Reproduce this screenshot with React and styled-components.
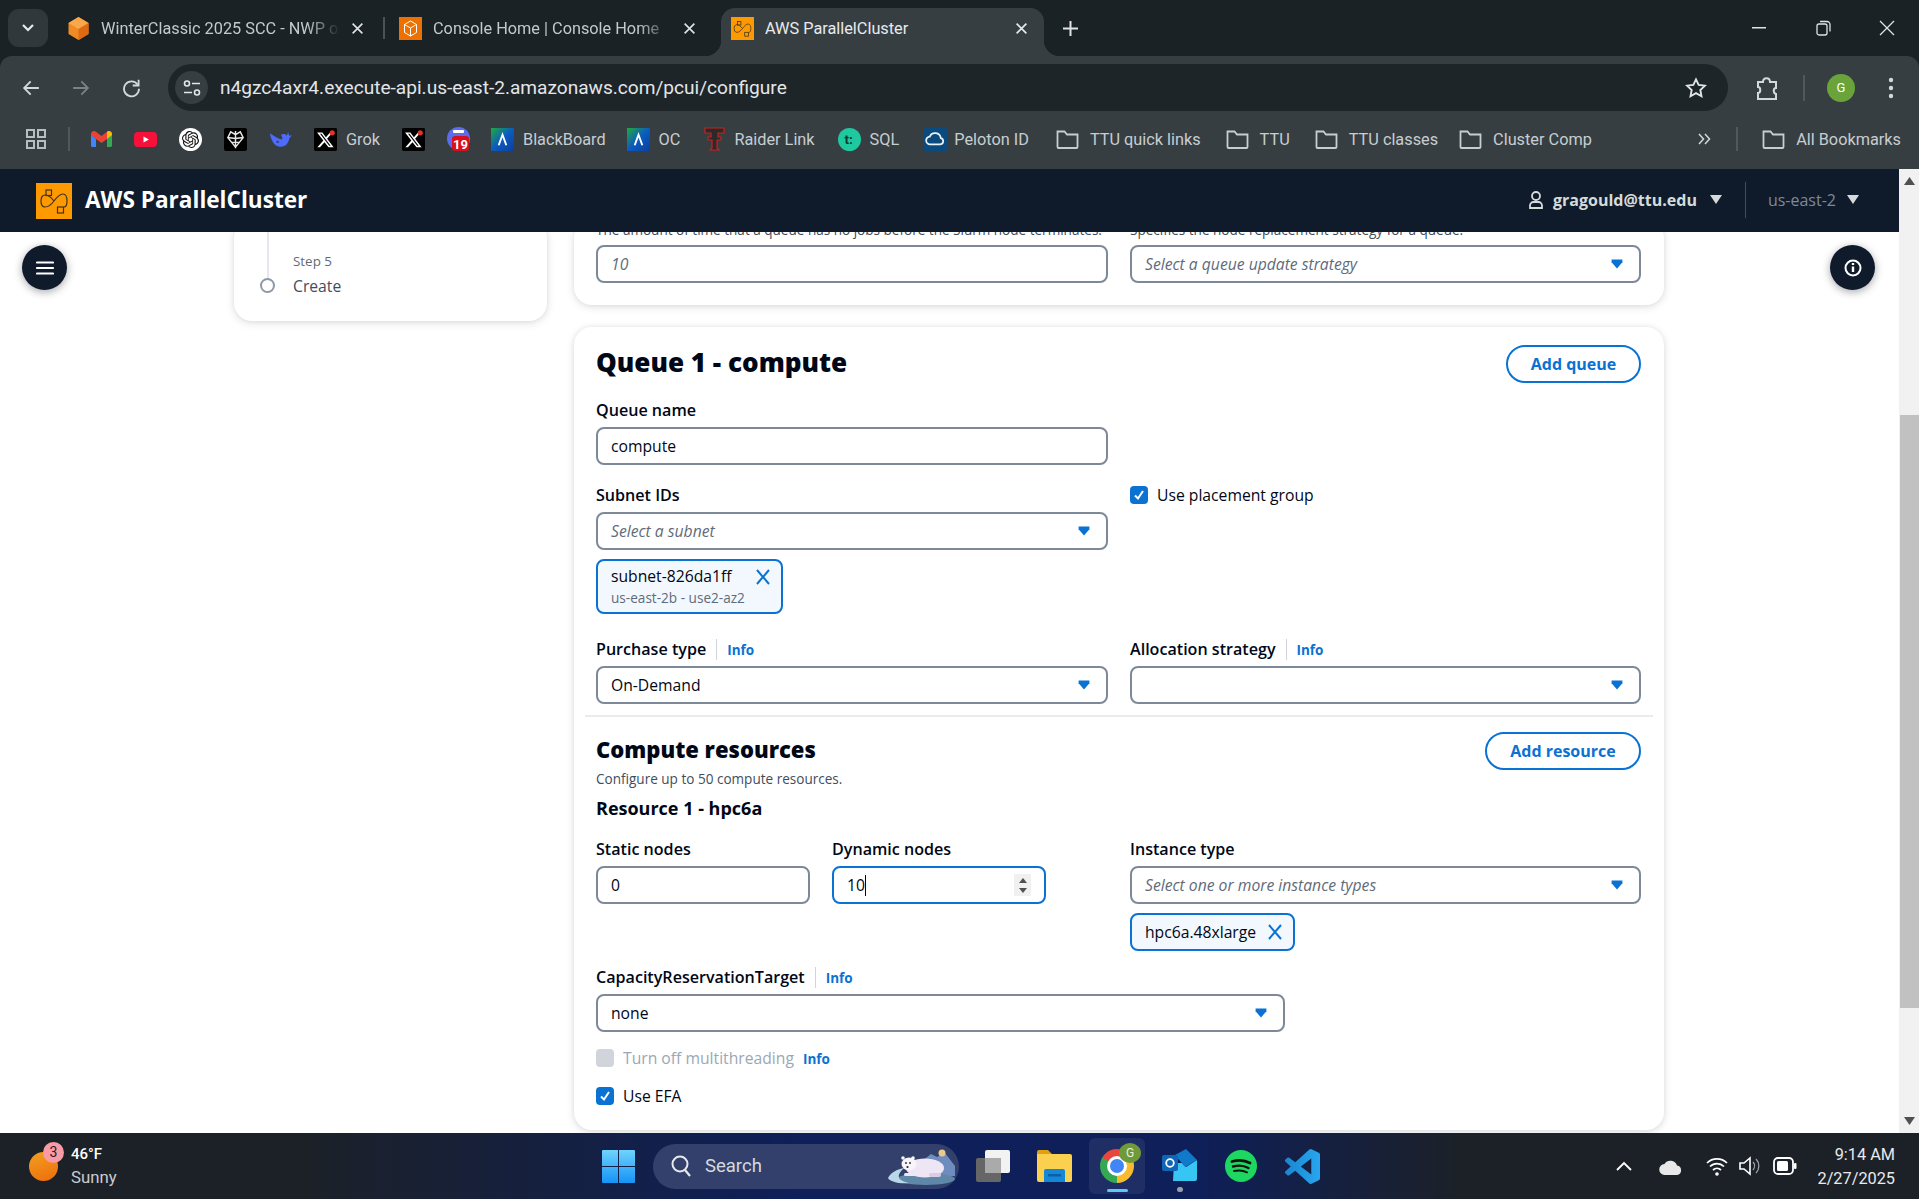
import React from "react";
import styled, { createGlobalStyle } from "styled-components";
import { SiOpenai } from "react-icons/si";

const GlobalStyle = createGlobalStyle`
  html, body {
    margin: 0;
    padding: 0;
    overflow: hidden;
    background: #fff;
  }
  * {
    box-sizing: border-box;
  }
`;

const Screen = styled.div`
  width: 1919px;
  height: 1199px;
  display: flex;
  flex-direction: column;
  overflow: hidden;
  font-family: "Open Sans", "Noto Sans", sans-serif;
  color: #000716;
`;

/* browser tabs */
const TabStrip = styled.div`
  height: 56px;
  flex: none;
  display: flex;
  align-items: flex-end;
  padding-left: 8px;
  background: #1b2226;
  font-family: Roboto, "Open Sans", sans-serif;
`;

const TabSearch = styled.div`
  width: 40px;
  height: 38px;
  margin: 0 9px 9px 0;
  border-radius: 11px;
  background: #30383c;
  display: flex;
  align-items: center;
  justify-content: center;
`;

const Tab = styled.div`
  position: relative;
  width: 323px;
  height: 48px;
  flex: none;
  display: flex;
  align-items: center;
  padding: 0 16px 8px 10px;
  gap: 11px;
  border-radius: 14px 14px 0 0;
  font-size: 16.3px;
  color: ${(p) => (p.$active ? "#e8eaed" : "#c4c9cc")};
  background: ${(p) => (p.$active ? "#363e42" : "transparent")};
  ${(p) =>
    p.$active &&
    `
    &::before, &::after {
      content: "";
      position: absolute;
      bottom: 0;
      width: 16px;
      height: 16px;
    }
    &::before {
      left: -16px;
      background: radial-gradient(circle at 0 0, transparent 16px, #363e42 16.5px);
    }
    &::after {
      right: -16px;
      background: radial-gradient(circle at 100% 0, transparent 16px, #363e42 16.5px);
    }
  `}
`;

const TabTitle = styled.span`
  flex: 1;
  white-space: nowrap;
  overflow: hidden;
  -webkit-mask-image: ${(p) =>
    p.$fade ? "linear-gradient(90deg, #000 86%, transparent 100%)" : "none"};
`;

const TabDivider = styled.div`
  width: 2px;
  height: 22px;
  margin: 0 4px 17px 3px;
  background: ${(p) => (p.$hidden ? "transparent" : "#4a5256")};
  flex: none;
`;

const TabAdd = styled.div`
  margin: 0 0 19px 18px;
  display: flex;
`;

const WindowControls = styled.div`
  margin-left: auto;
  align-self: stretch;
  display: flex;
`;

const WindowButton = styled.div`
  width: 64px;
  display: flex;
  align-items: center;
  justify-content: center;
`;

/* toolbar and bookmarks */
const BrowserBar = styled.div`
  height: 113px;
  flex: none;
  background: #1b2226;
  font-family: Roboto, "Open Sans", sans-serif;
`;

const BrowserBarInner = styled.div`
  height: 100%;
  background: #363e42;
  border-radius: 12px 12px 0 0;
`;

const Toolbar = styled.div`
  height: 55px;
  padding: 8px 16px 0 7px;
  display: flex;
  align-items: center;
`;

const NavButton = styled.div`
  width: 48px;
  height: 47px;
  margin-right: ${(p) => p.$gap || 0}px;
  display: flex;
  align-items: center;
  justify-content: center;
  flex: none;
`;

const AddressBar = styled.div`
  flex: 1;
  height: 47px;
  margin-left: 13px;
  border-radius: 24px;
  background: #1e2528;
  display: flex;
  align-items: center;
  padding: 0 21px 0 7px;
`;

const SiteBadge = styled.div`
  width: 33px;
  height: 33px;
  border-radius: 50%;
  background: #363e42;
  display: flex;
  align-items: center;
  justify-content: center;
`;

const Url = styled.div`
  margin-left: 12px;
  flex: 1;
  font-size: 19.1px;
  color: #e3e6e8;
`;

const ToolIcon = styled.div`
  width: ${(p) => p.$w}px;
  margin-left: ${(p) => p.$ml}px;
  display: flex;
  justify-content: center;
  flex: none;
`;

const ToolDivider = styled.div`
  width: 2px;
  height: 26px;
  margin-left: 18px;
  background: #50585c;
  flex: none;
`;

const Avatar = styled.div`
  width: 28px;
  height: 28px;
  margin-left: 22px;
  border-radius: 50%;
  background: #6aa33a;
  color: #fff;
  font-size: 13px;
  display: flex;
  align-items: center;
  justify-content: center;
  flex: none;
`;

const BookmarkBar = styled.div`
  height: 58px;
  padding: 0 18px 2px 26px;
  display: flex;
  align-items: center;
  font-size: 16.3px;
  color: #c8cdd0;
`;

const BookmarkDivider = styled.div`
  width: 2px;
  height: 24px;
  margin: 0 ${(p) => p.$right}px 0 ${(p) => p.$left}px;
  background: #50585c;
  flex: none;
`;

const Bookmark = styled.div`
  display: flex;
  align-items: center;
  gap: ${(p) => p.$inner ?? 9}px;
  margin-right: ${(p) => p.$gap ?? 22}px;
  white-space: nowrap;
  flex: none;
`;

const OpenAiBadge = styled.div`
  width: 23px;
  height: 23px;
  border-radius: 50%;
  background: #fff;
  color: #111;
  display: flex;
  align-items: center;
  justify-content: center;
`;

const Chevrons = styled.span`
  margin-left: auto;
  display: flex;
  flex: none;
`;

/* app view */
const AppView = styled.div`
  position: relative;
  flex: 1;
  min-height: 0;
  display: flex;
`;

const AppColumn = styled.div`
  flex: 1;
  min-width: 0;
  display: flex;
  flex-direction: column;
`;

const AppHeader = styled.header`
  height: 63px;
  flex: none;
  background: #0f1b2a;
  display: flex;
  align-items: center;
  padding: 0 0 0 36px;
  color: #fff;
`;

const AppTitle = styled.div`
  margin: 0 0 2px 13px;
  font-size: 22.6px;
  font-weight: 700;
`;

const HeaderRight = styled.div`
  margin-left: auto;
  display: flex;
  align-items: center;
  padding: 0 40px 2px 0;
`;

const UserName = styled.span`
  margin-left: 9px;
  font-size: 16px;
  font-weight: 700;
  color: #d5dbdb;
`;

const HeaderDivider = styled.div`
  width: 1px;
  height: 36px;
  margin: 0 22px 0 23px;
  background: #414d5c;
`;

const RegionName = styled.span`
  font-size: 16px;
  color: #7d8998;
`;

const HeaderCaret = styled.span`
  width: 0;
  height: 0;
  margin-left: ${(p) => p.$ml}px;
  border-left: 6px solid transparent;
  border-right: 6px solid transparent;
  border-top: 9px solid #d5dbdb;
`;

const Viewport = styled.div`
  flex: 1;
  min-height: 0;
  overflow: hidden;
  background: #fff;
`;

const ScrolledPage = styled.div`
  margin-top: -12px;
  padding-left: 234px;
  display: flex;
  align-items: flex-start;
  gap: 27px;
`;

const Card = styled.section`
  background: #fff;
  border-radius: 18px;
  box-shadow: 0 2px 9px rgba(0, 28, 36, 0.13), 0 0 5px rgba(0, 28, 36, 0.06);
`;

const SideCard = styled(Card)`
  width: 313px;
  display: flex;
  padding: 0 0 25px 26px;
`;

const StepMarker = styled.div`
  width: 15px;
  display: flex;
  flex-direction: column;
  align-items: center;
  padding-bottom: 3px;
`;

const StepLine = styled.div`
  width: 2px;
  flex: 1;
  background: #e4e7eb;
`;

const StepCircle = styled.div`
  width: 15px;
  height: 15px;
  border: 2px solid #8d99a8;
  border-radius: 50%;
  flex: none;
`;

const StepText = styled.div`
  margin-left: 18px;
  padding-top: 32px;
`;

const StepLabel = styled.div`
  font-size: 13.4px;
  line-height: 18px;
  color: #5f6b7a;
`;

const StepName = styled.div`
  margin-top: 6px;
  font-size: 15.7px;
  line-height: 20px;
  color: #414d5c;
`;

const MainColumn = styled.div`
  width: 1090px;
  display: flex;
  flex-direction: column;
  gap: 22px;
`;

const FormCard = styled(Card)`
  padding: 0 23px ${(p) => p.$bottom}px 22px;
`;

const Columns = styled.div`
  display: grid;
  grid-template-columns: 512px 511px;
  column-gap: 22px;
  margin-top: ${(p) => p.$mt || 0}px;
`;

const NodeColumns = styled.div`
  display: grid;
  grid-template-columns: 214px 214px;
  column-gap: 22px;
`;

const Helper = styled.div`
  font-size: 13.55px;
  line-height: 20px;
  color: #414d5c;
  white-space: nowrap;
`;

const Box = styled.div`
  position: relative;
  height: 38px;
  width: ${(p) => p.$w || "100%"};
  margin-top: ${(p) => p.$mt || 0}px;
  padding: 0 12px 1px 13px;
  display: flex;
  align-items: center;
  border: 2px solid ${(p) => (p.$focus ? "#0972d3" : "#7d8998")};
  border-radius: 8px;
  background: #fff;
  font-size: 15.7px;
  line-height: 22px;
  color: #000716;
`;

const Placeholder = styled.span`
  flex: 1;
  font-style: italic;
  color: #5f6b7a;
`;

const BoxValue = styled.span`
  flex: 1;
`;

const Caret = styled.svg`
  width: 12px;
  height: 10px;
  margin-right: 4px;
  flex: none;
`;

const TextCaret = styled.span`
  display: inline-block;
  width: 1px;
  height: 21px;
  background: #000716;
  vertical-align: -5px;
`;

const Spinner = styled.div`
  position: absolute;
  right: 13px;
  top: 6px;
  width: 17px;
  height: 22px;
  background: #f0f0f0;
  display: flex;
  flex-direction: column;
  align-items: center;
  justify-content: center;
  gap: 5px;
`;

const SpinArrow = styled.span`
  width: 0;
  height: 0;
  border-left: 4px solid transparent;
  border-right: 4px solid transparent;
  ${(p) => (p.$up ? "border-bottom: 5px solid #505050;" : "border-top: 5px solid #505050;")}
`;

const Label = styled.div`
  height: 22px;
  display: flex;
  align-items: center;
  margin-top: ${(p) => p.$mt || 0}px;
  margin-bottom: 6px;
  font-size: 16.1px;
  font-weight: 600;
  white-space: nowrap;
`;

const InfoLink = styled.span`
  margin-left: ${(p) => p.$ml || 0}px;
  padding-top: 2px;
  font-size: 13.5px;
  font-weight: 700;
  color: #0972d3;
`;

const InfoDivider = styled.span`
  width: 1px;
  height: 21px;
  margin-left: 10px;
  background: #d1d5db;
`;

const TitleRow = styled.div`
  display: flex;
  align-items: center;
  justify-content: space-between;
  margin-top: ${(p) => p.$mt}px;
`;

const QueueTitle = styled.h2`
  margin: -4px 0 0;
  font-size: 26.1px;
  line-height: 36px;
  font-weight: 800;
`;

const SectionTitle = styled.h3`
  margin: -4px 0 0;
  font-size: 22px;
  line-height: 30px;
  font-weight: 800;
`;

const SubText = styled.div`
  font-size: 13.55px;
  line-height: 18px;
  color: #414d5c;
`;

const ResourceTitle = styled.h4`
  margin: 9px 0 0;
  font-size: 18px;
  line-height: 22px;
  font-weight: 700;
`;

const PillButton = styled.div`
  height: 38px;
  width: ${(p) => p.$w}px;
  border: 2px solid #0972d3;
  border-radius: 20px;
  display: flex;
  align-items: center;
  justify-content: center;
  font-size: 16px;
  font-weight: 700;
  color: #0972d3;
`;

const Token = styled.div`
  width: ${(p) => p.$w}px;
  height: ${(p) => p.$h}px;
  margin-top: 9px;
  padding: ${(p) => (p.$tall ? "3px" : "0")} 10px 0 13px;
  border: 2px solid #0972d3;
  border-radius: 8px;
  background: #f2f8fd;
  display: flex;
  align-items: ${(p) => (p.$tall ? "flex-start" : "center")};
  justify-content: space-between;
  font-size: 15.7px;
  line-height: 24px;
`;

const TokenSub = styled.div`
  font-size: 13.6px;
  line-height: 20px;
  color: #5f6b7a;
`;

const TokenClose = styled.svg`
  margin-top: ${(p) => p.$mt || 0}px;
  flex: none;
`;

const Divider = styled.div`
  height: 2px;
  margin: 11px -12px 0 -11px;
  background: #e9ebed;
`;

const CheckRow = styled.div`
  height: 18px;
  margin-top: ${(p) => p.$mt || 0}px;
  display: flex;
  align-items: center;
  font-size: 15.7px;
  color: ${(p) => (p.$off ? "#9ba7b6" : "#000716")};
  white-space: nowrap;
`;

const CheckBox = styled.span`
  width: 18px;
  height: 18px;
  margin-right: ${(p) => p.$gap}px;
  border-radius: 4px;
  background: ${(p) => (p.$off ? "#d1d5db" : "#0972d3")};
  display: flex;
  align-items: center;
  justify-content: center;
  flex: none;
`;

const FloatButton = styled.div`
  position: absolute;
  top: 76px;
  ${(p) => (p.$right ? "right: 44px;" : "left: 22px;")}
  width: 45px;
  height: 45px;
  border-radius: 50%;
  background: #0f1b2a;
  box-shadow: 0 2px 8px rgba(0, 7, 22, 0.35);
  display: flex;
  align-items: center;
  justify-content: center;
`;

const ScrollTrack = styled.div`
  width: 20px;
  flex: none;
  background: #f1f1f1;
  display: flex;
  flex-direction: column;
  align-items: flex-end;
`;

const ScrollArrow = styled.div`
  width: 19px;
  height: 24px;
  display: flex;
  align-items: center;
  justify-content: center;
  margin-top: ${(p) => (p.$down ? "auto" : "0")};
`;

const ScrollThumb = styled.div`
  width: 19px;
  height: 593px;
  margin-top: 222px;
  background: #c1c1c1;
`;

/* windows taskbar */
const Taskbar = styled.div`
  height: 66px;
  flex: none;
  display: flex;
  align-items: center;
  background: linear-gradient(90deg, #1c2128 0, #1c2128 16%, #0e1f5a 42%, #0e1f5a 62%, #1c2128 76%, #1c2128 100%);
  color: #fff;
  font-family: Roboto, "Open Sans", sans-serif;
`;

const Weather = styled.div`
  position: relative;
  width: 602px;
  padding-left: 71px;
  flex: none;
  font-size: 15px;
`;

const WeatherSun = styled.div`
  position: absolute;
  left: 29px;
  top: 9px;
  width: 29px;
  height: 29px;
  border-radius: 50%;
  background: linear-gradient(160deg, #f0a020, #ef6c0c);
`;

const WeatherBadge = styled.div`
  position: absolute;
  left: 43px;
  top: -1px;
  width: 21px;
  height: 21px;
  border-radius: 50%;
  background: #f99aa5;
  color: #1c2128;
  font-size: 14px;
  display: flex;
  align-items: center;
  justify-content: center;
`;

const WeatherTemp = styled.div`
  font-weight: 500;
  line-height: 22px;
`;

const WeatherSky = styled.div`
  font-size: 16.8px;
  line-height: 25px;
  color: #c9ccd0;
`;

const SearchPill = styled.div`
  width: 306px;
  height: 45px;
  margin-left: 18px;
  padding-left: 17px;
  border-radius: 23px;
  background: #33406b;
  display: flex;
  align-items: center;
  font-size: 18.5px;
  color: #d6d9de;
  position: relative;
`;

const SearchText = styled.span`
  margin-left: 13px;
`;

const Mascot = styled.svg`
  position: absolute;
  right: 4px;
  top: 4px;
`;

const TaskIcon = styled.div`
  position: relative;
  margin-left: ${(p) => p.$ml}px;
  width: ${(p) => p.$w}px;
  height: 56px;
  display: flex;
  align-items: center;
  justify-content: center;
  flex: none;
  border-radius: 6px;
  background: ${(p) => (p.$active ? "rgba(255,255,255,0.07)" : "transparent")};
`;

const RunBar = styled.span`
  position: absolute;
  left: 50%;
  bottom: 2px;
  width: ${(p) => (p.$wide ? 21 : 6)}px;
  height: ${(p) => (p.$wide ? 3 : 5)}px;
  margin-left: ${(p) => (p.$wide ? -10 : -3)}px;
  border-radius: 3px;
  background: ${(p) => (p.$wide ? "#5cc8fa" : "#9aa0a8")};
`;

const ChromeBall = styled.div`
  width: 34px;
  height: 34px;
  border-radius: 50%;
  background: conic-gradient(from -60deg, #e8453c 0 120deg, #f9bb2d 120deg 240deg, #34a853 240deg 360deg);
  display: flex;
  align-items: center;
  justify-content: center;
`;

const ChromeEye = styled.div`
  width: 20px;
  height: 20px;
  border-radius: 50%;
  background: #4285f4;
  border: 3px solid #fff;
`;

const ProfileDot = styled.div`
  position: absolute;
  top: 5px;
  right: 4px;
  width: 22px;
  height: 20px;
  border-radius: 50%;
  background: #6f9a3a;
  color: #e6f0d8;
  font-size: 12px;
  display: flex;
  align-items: center;
  justify-content: center;
`;

const Tray = styled.div`
  margin-left: auto;
  display: flex;
  align-items: center;
  padding-right: 24px;
`;

const TrayIcon = styled.div`
  margin-left: ${(p) => p.$ml}px;
  display: flex;
`;

const Clock = styled.div`
  margin-left: 21px;
  padding-top: 2px;
  text-align: right;
  font-size: 16.3px;
  line-height: 24px;
  color: #e8eaed;
`;

/* drawings */
const ClusterLogo = ({ size = 36 }) => (
  <svg width={size} height={size} viewBox="0 0 36 36">
    <rect width="36" height="36" fill="#f90" />
    <g fill="none" stroke="#3f3320" strokeWidth="1.200">
      <rect x="10" y="7" width="5.500" height="5.500" />
      <rect x="21.500" y="24" width="6" height="6" />
      <path d="M18 18c-3-4-6-6-9-6-3 0-4 3-4 6s1 6 4 6c3 0 6-2 9-6s6-7 9-7 4 3 4 7-1 6-3 6" />
    </g>
  </svg>
);

const CaretIcon = () => (
  <Caret viewBox="0 0 12 10">
    <path d="M.6.6h10.8v2.6L6 9.6.6 3.2z" fill="#0972d3" />
  </Caret>
);

const CloseX = ({ size = 15, color = "#0972d3", width = 2 }) => (
  <svg width={size} height={size} viewBox="0 0 16 16">
    <path d="M2 2l12 12M14 2L2 14" stroke={color} strokeWidth={width} fill="none" />
  </svg>
);

const CheckMark = () => (
  <svg width="12" height="12" viewBox="0 0 12 12">
    <path d="M2 6.5l3 3 5-7.5" stroke="#fff" strokeWidth="2" fill="none" />
  </svg>
);

const FolderIcon = () => (
  <svg width="23" height="22" viewBox="0 0 23 22">
    <path d="M1.5 18.5V3.5h7l2.5 3h10.5v12.5a1 1 0 0 1-1 1h-18a1 1 0 0 1-1-1z" fill="none" stroke="#c8cdd0" strokeWidth="1.8" />
  </svg>
);

const XLogo = () => (
  <svg width="23" height="23" viewBox="0 0 24 24">
    <rect width="24" height="24" rx="1.500" fill="#000" />
    <path transform="translate(2.200 2.800) scale(.8)" fill="#fff" d="M18.244 2.25h3.308l-7.227 8.26 8.502 11.24H16.17l-5.214-6.817L4.99 21.75H1.68l7.73-8.835L1.254 2.25H8.08l4.713 6.231zm-1.161 17.52h1.833L7.084 4.126H5.117z" />
    <circle cx="19" cy="5" r="2.700" fill="#e5332a" />
  </svg>
);

const GmailIcon = () => (
  <svg width="21" height="16" viewBox="0 0 21 16">
    <path d="M0 3v11.500A1.500 1.500 0 0 0 1.500 16H5V8z" fill="#4285f4" />
    <path d="M21 3v11.500a1.500 1.500 0 0 1-1.500 1.500H16V8z" fill="#34a853" />
    <path d="M0 3a3 3 0 0 1 5-2.200l5.500 4.200L16 .8A3 3 0 0 1 18 0l-2 8-5.500 4L5 8 0 4z" fill="#ea4335" />
    <path d="M16 .8A3 3 0 0 1 21 3v1l-5 4z" fill="#fbbc04" />
  </svg>
);

const YoutubeIcon = () => (
  <svg width="23" height="15" viewBox="0 0 23 15">
    <rect width="23" height="15" rx="4" fill="#f6113a" />
    <path d="M9.500 4.500l5.500 3-5.500 3z" fill="#fff" />
  </svg>
);

const SpiderIcon = () => (
  <svg width="23" height="23" viewBox="0 0 24 24">
    <rect width="24" height="24" rx="2" fill="#000" />
    <g fill="none" stroke="#e8e8e8" strokeWidth="1.500">
      <path d="M12 3v18M12 7l-5-3-3 6 4 5 4 5M12 7l5-3 3 6-4 5-4 5M4 10l8 1 8-1M8 15h8" />
    </g>
  </svg>
);

const WhaleIcon = () => (
  <svg width="23" height="20" viewBox="0 0 24 20">
    <path d="M1 4c1 8 5 14 11 14 5 0 8-3 9-8 1-2 2-3 3-4l-3 .5-1-3.500-1.500 3.500c-2-2-4-2-6-1 1 2 2 3 1 5C10 10 5 7 1 4z" fill="#4d6bfe" />
    <circle cx="9" cy="13" r="1.200" fill="#363e42" />
  </svg>
);

const CalendarIcon = () => (
  <svg width="23" height="24" viewBox="0 0 23 24">
    <circle cx="11.500" cy="11.500" r="11.500" fill="#5a6df0" />
    <rect x="6" y="3" width="11" height="3" rx="1" fill="#fff" />
    <rect x="5" y="9" width="17" height="15" rx="3" fill="#d8101c" />
    <text x="13.500" y="21.500" fontSize="13" fontWeight="700" fill="#fff" textAnchor="middle" fontFamily="Roboto">19</text>
  </svg>
);

const AnthologyIcon = () => (
  <svg width="23" height="23" viewBox="0 0 24 24">
    <defs>
      <linearGradient id="anth" x1="0" y1="0" x2="1" y2="1">
        <stop offset="0" stopColor="#1faa3c" />
        <stop offset=".5" stopColor="#0b5bc0" />
        <stop offset="1" stopColor="#0a3f9c" />
      </linearGradient>
    </defs>
    <rect width="24" height="24" fill="url(#anth)" />
    <path d="M8 18l4-11 4 11" fill="none" stroke="#fff" strokeWidth="2" />
  </svg>
);

const TexasTechIcon = () => (
  <svg width="21" height="24" viewBox="0 0 21 24">
    <path d="M1 1h19v5h-6v4h3v3h-4v8l2 2H6l2-2v-8H4v-3h3V6H1z" fill="#2a2a2a" stroke="#c8201f" strokeWidth="1.200" />
  </svg>
);

const TursoIcon = () => (
  <svg width="23" height="23" viewBox="0 0 24 24">
    <circle cx="12" cy="12" r="12" fill="#1fc9a0" />
    <text x="11" y="17" fontSize="14" fontWeight="700" fill="#0c3a33" textAnchor="middle" fontFamily="Roboto">t:</text>
  </svg>
);

const PelotonIcon = () => (
  <svg width="23" height="23" viewBox="0 0 24 24">
    <rect width="24" height="24" rx="2" fill="#0b4a7c" />
    <path d="M6.500 17a4 4 0 0 1-.5-8 6 6 0 0 1 11.500 1.500A3.300 3.300 0 0 1 17 17z" fill="none" stroke="#e8f2fa" strokeWidth="1.800" />
  </svg>
);

const GemIcon = () => (
  <svg width="23" height="23" viewBox="0 0 23 23">
    <path d="M11.500 0l10 6v11l-10 6-10-6V6z" fill="#f08a24" />
    <path d="M11.500 0l10 6-10 6-10-6z" fill="#f7a84a" />
    <path d="M11.500 12l10-6v11l-10 6z" fill="#e06a14" />
  </svg>
);

const CubeIcon = () => (
  <svg width="23" height="23" viewBox="0 0 23 23">
    <rect width="23" height="23" fill="#ed7100" />
    <path d="M11.500 4l6 3.500v8l-6 3.500-6-3.500v-8zM5.500 7.500l6 3.500 6-3.500M11.500 11v8" fill="none" stroke="#fff" strokeWidth="1" />
  </svg>
);

const WindowsLogo = () => (
  <svg width="33" height="33" viewBox="0 0 33 33">
    <defs>
      <linearGradient id="win" x1="0" y1="0" x2="0" y2="1">
        <stop offset="0" stopColor="#6fd3fc" />
        <stop offset="1" stopColor="#1593f5" />
      </linearGradient>
    </defs>
    <path d="M0 1a1 1 0 0 1 1-1h15v16H0zM17 0h15a1 1 0 0 1 1 1v15H17zM0 17h16v16H1a1 1 0 0 1-1-1zM17 17h16v15a1 1 0 0 1-1 1H17z" fill="url(#win)" />
  </svg>
);

const TaskViewIcon = () => (
  <svg width="34" height="32" viewBox="0 0 34 32">
    <rect x="0" y="8" width="25" height="24" rx="2" fill="#666" />
    <rect x="9" y="0" width="25" height="23" rx="2" fill="#f2f2f2" />
    <rect x="9" y="8" width="16" height="15" fill="#aaa" />
  </svg>
);

const ExplorerIcon = () => (
  <svg width="35" height="32" viewBox="0 0 35 32">
    <path d="M0 2a2 2 0 0 1 2-2h9l4 4H0z" fill="#e0a010" />
    <path d="M0 4h33a2 2 0 0 1 2 2v24a2 2 0 0 1-2 2H2a2 2 0 0 1-2-2z" fill="#fbd04f" />
    <path d="M7 21a2 2 0 0 1 2-2h17a2 2 0 0 1 2 2v11H7z" fill="#1488d8" />
    <rect x="11" y="24" width="13" height="2.500" fill="#0a5fa5" />
  </svg>
);

const OutlookIcon = () => (
  <svg width="35" height="35" viewBox="0 0 35 35">
    <path d="M12 14h8l4 4 11-7v19a2 2 0 0 1-2 2H11z" fill="#37c6f4" />
    <path d="M13 6l11-6 11 11-12 7z" fill="#1079c9" />
    <rect x="0" y="6" width="16" height="16" rx="2" fill="#0f66b8" />
    <circle cx="8" cy="14" r="3.800" fill="none" stroke="#fff" strokeWidth="1.800" />
  </svg>
);

const SpotifyIcon = () => (
  <svg width="32" height="32" viewBox="0 0 32 32">
    <circle cx="16" cy="16" r="16" fill="#1ed760" />
    <g fill="none" stroke="#111" strokeLinecap="round">
      <path d="M7 11.500c6-1.800 13-1.300 18 1.500" strokeWidth="2.800" />
      <path d="M8 16.500c5-1.400 11-1 15.500 1.500" strokeWidth="2.400" />
      <path d="M9 21c4.500-1 9-.8 13 1.300" strokeWidth="2" />
    </g>
  </svg>
);

const VscodeIcon = () => (
  <svg width="35" height="35" viewBox="0 0 24 24" preserveAspectRatio="none">
    <defs>
      <linearGradient id="vsc" x1="0" y1="0" x2="1" y2="0">
        <stop offset="0" stopColor="#1a86d0" />
        <stop offset="1" stopColor="#28a6f0" />
      </linearGradient>
    </defs>
    <path fill="url(#vsc)" d="M23.15 2.587 18.21.21a1.494 1.494 0 0 0-1.705.29l-9.46 8.63-4.12-3.128a.999.999 0 0 0-1.276.057L.327 7.261A1 1 0 0 0 .326 8.74L3.899 12 .326 15.26a1 1 0 0 0 .001 1.479L1.65 17.94a.999.999 0 0 0 1.276.057l4.12-3.128 9.46 8.63a1.492 1.492 0 0 0 1.704.29l4.942-2.377A1.5 1.5 0 0 0 24 20.06V3.939a1.5 1.5 0 0 0-.85-1.352zm-5.146 14.861L10.826 12l7.178-5.448v10.896z" />
  </svg>
);

const bookmarks = [
  { icon: <GmailIcon /> },
  { icon: <YoutubeIcon /> },
  {
    icon: (
      <OpenAiBadge>
        <SiOpenai size={17} />
      </OpenAiBadge>
    ),
  },
  { icon: <SpiderIcon /> },
  { icon: <WhaleIcon /> },
  { icon: <XLogo />, text: "Grok" },
  { icon: <XLogo /> },
  { icon: <CalendarIcon />, gap: 21 },
  { icon: <AnthologyIcon />, text: "BlackBoard", gap: 21 },
  { icon: <AnthologyIcon />, text: "OC", gap: 24 },
  { icon: <TexasTechIcon />, text: "Raider Link", gap: 23 },
  { icon: <TursoIcon />, text: "SQL", gap: 25 },
  { icon: <PelotonIcon />, text: "Peloton ID", inner: 7, gap: 27 },
  { icon: <FolderIcon />, text: "TTU quick links", inner: 11, gap: 25 },
  { icon: <FolderIcon />, text: "TTU", inner: 11, gap: 25 },
  { icon: <FolderIcon />, text: "TTU classes", inner: 11, gap: 21 },
  { icon: <FolderIcon />, text: "Cluster Comp", inner: 11, gap: 0 },
];

const App = () => {
  return (
    <Screen>
      <GlobalStyle />
      <TabStrip>
        <TabSearch>
          <svg width="14" height="10" viewBox="0 0 14 10">
            <path d="M2 2l5 5 5-5" fill="none" stroke="#e8eaed" strokeWidth="2.200" />
          </svg>
        </TabSearch>
        <Tab>
          <GemIcon />
          <TabTitle $fade>WinterClassic 2025 SCC - NWP on Azure</TabTitle>
          <CloseX size={13} color="#e0e2e4" />
        </Tab>
        <TabDivider />
        <Tab>
          <CubeIcon />
          <TabTitle $fade>Console Home | Console Home</TabTitle>
          <CloseX size={13} color="#e0e2e4" />
        </Tab>
        <TabDivider $hidden />
        <Tab $active>
          <ClusterLogo size={23} />
          <TabTitle>AWS ParallelCluster</TabTitle>
          <CloseX size={13} color="#e8eaed" />
        </Tab>
        <TabAdd>
          <svg width="17" height="17" viewBox="0 0 17 17">
            <path d="M8.500 1v15M1 8.500h15" stroke="#e0e2e4" strokeWidth="2" />
          </svg>
        </TabAdd>
        <WindowControls>
          <WindowButton>
            <svg width="14" height="2"><rect width="14" height="1.500" fill="#e0e2e4" /></svg>
          </WindowButton>
          <WindowButton>
            <svg width="15" height="16" viewBox="0 0 15 16">
              <rect x="1" y="4" width="10" height="11" rx="2" fill="none" stroke="#e0e2e4" strokeWidth="1.300" />
              <path d="M4 1.500h7a3 3 0 0 1 3 3v7" fill="none" stroke="#e0e2e4" strokeWidth="1.300" />
            </svg>
          </WindowButton>
          <WindowButton>
            <svg width="16" height="16" viewBox="0 0 16 16">
              <path d="M1 1l14 14M15 1L1 15" stroke="#e0e2e4" strokeWidth="1.300" />
            </svg>
          </WindowButton>
        </WindowControls>
      </TabStrip>

      <BrowserBar>
        <BrowserBarInner>
          <Toolbar>
            <NavButton $gap={1}>
              <svg width="19" height="18" viewBox="0 0 22 22">
                <path d="M20 11H3M10 3l-8 8 8 8" fill="none" stroke="#d5d8da" strokeWidth="2.200" />
              </svg>
            </NavButton>
            <NavButton $gap={3}>
              <svg width="19" height="18" viewBox="0 0 22 22">
                <path d="M2 11h17M12 3l8 8-8 8" fill="none" stroke="#7b8286" strokeWidth="2.200" />
              </svg>
            </NavButton>
            <NavButton>
              <svg width="19" height="20" viewBox="0 0 22 24">
                <path d="M18.500 8A9 9 0 1 0 20 13" fill="none" stroke="#d5d8da" strokeWidth="2.200" />
                <path d="M19.500 2v7h-7" fill="none" stroke="#d5d8da" strokeWidth="2.200" />
              </svg>
            </NavButton>
            <AddressBar>
              <SiteBadge>
                <svg width="20" height="20" viewBox="0 0 20 20">
                  <g fill="none" stroke="#e3e6e8" strokeWidth="1.600">
                    <circle cx="5" cy="5.500" r="2.500" />
                    <path d="M10 5.500h8M2 14.500h8" />
                    <circle cx="15" cy="14.500" r="2.500" />
                  </g>
                </svg>
              </SiteBadge>
              <Url>n4gzc4axr4.execute-api.us-east-2.amazonaws.com/pcui/configure</Url>
              <svg width="22" height="22" viewBox="0 0 24 24">
                <path d="M12 2.500l2.900 6.200 6.800.8-5 4.700 1.300 6.800-6-3.400-6 3.400 1.300-6.800-5-4.700 6.800-.8z" fill="none" stroke="#e3e6e8" strokeWidth="2" />
              </svg>
            </AddressBar>
            <ToolIcon $w={36} $ml={21}>
              <svg width="24" height="26" viewBox="0 0 24 26">
                <path d="M3 7h5c0-5 7-5 7 0h6v6c-3 0-3 5 0 6v5H3v-6c3 0 3-6 0-6z" fill="none" stroke="#d5d8da" strokeWidth="2" />
              </svg>
            </ToolIcon>
            <ToolDivider />
            <Avatar>G</Avatar>
            <ToolIcon $w={24} $ml={24}>
              <svg width="6" height="24" viewBox="0 0 6 24">
                <circle cx="3" cy="4" r="2.200" fill="#d5d8da" />
                <circle cx="3" cy="12" r="2.200" fill="#d5d8da" />
                <circle cx="3" cy="20" r="2.200" fill="#d5d8da" />
              </svg>
            </ToolIcon>
          </Toolbar>
          <BookmarkBar>
            <svg width="20" height="20" viewBox="0 0 20 20">
              <g fill="none" stroke="#b8bdc0" strokeWidth="2">
                <rect x="1" y="1" width="7" height="7" />
                <rect x="12" y="1" width="7" height="7" />
                <rect x="1" y="12" width="7" height="7" />
                <rect x="12" y="12" width="7" height="7" />
              </g>
            </svg>
            <BookmarkDivider $left={22} $right={21} />
            {bookmarks.map((b, i) => (
              <Bookmark key={i} $gap={b.gap} $inner={b.inner}>
                {b.icon}
                {b.text}
              </Bookmark>
            ))}
            <Chevrons>
              <svg width="14" height="14" viewBox="0 0 14 14">
                <path d="M2 2l4.500 5L2 12M8 2l4.500 5L8 12" fill="none" stroke="#d5d8da" strokeWidth="1.500" />
              </svg>
            </Chevrons>
            <BookmarkDivider $left={25} $right={24} />
            <Bookmark $gap={0} $inner={11}>
              <FolderIcon />
              All Bookmarks
            </Bookmark>
          </BookmarkBar>
        </BrowserBarInner>
      </BrowserBar>

      <AppView>
        <AppColumn>
          <AppHeader>
            <ClusterLogo />
            <AppTitle>AWS ParallelCluster</AppTitle>
            <HeaderRight>
              <svg width="16" height="18" viewBox="0 0 16 18">
                <circle cx="8" cy="5" r="4" fill="none" stroke="#d5dbdb" strokeWidth="1.800" />
                <path d="M2 17v-2.500A3.500 3.500 0 0 1 5.500 11h5a3.500 3.500 0 0 1 3.500 3.500V17z" fill="none" stroke="#d5dbdb" strokeWidth="1.800" />
              </svg>
              <UserName>gragould@ttu.edu</UserName>
              <HeaderCaret $ml={13} />
              <HeaderDivider />
              <RegionName>us-east-2</RegionName>
              <HeaderCaret $ml={11} />
            </HeaderRight>
          </AppHeader>
          <Viewport>
            <ScrolledPage>
              <SideCard>
                <StepMarker>
                  <StepLine />
                  <StepCircle />
                </StepMarker>
                <StepText>
                  <StepLabel>Step 5</StepLabel>
                  <StepName>Create</StepName>
                </StepText>
              </SideCard>
              <MainColumn>
                <FormCard $bottom={22}>
                  <Columns>
                    <div>
                      <Helper>The amount of time that a queue has no jobs before the Slurm node terminates.</Helper>
                      <Box $mt={5}>
                        <Placeholder>10</Placeholder>
                      </Box>
                    </div>
                    <div>
                      <Helper>Specifies the node replacement strategy for a queue.</Helper>
                      <Box $mt={5}>
                        <Placeholder>Select a queue update strategy</Placeholder>
                        <CaretIcon />
                      </Box>
                    </div>
                  </Columns>
                </FormCard>

                <FormCard $bottom={25}>
                  <TitleRow $mt={18}>
                    <QueueTitle>Queue 1 - compute</QueueTitle>
                    <PillButton $w={135}>Add queue</PillButton>
                  </TitleRow>

                  <Columns $mt={16}>
                    <div>
                      <Label>Queue name</Label>
                      <Box>
                        <BoxValue>compute</BoxValue>
                      </Box>
                    </div>
                  </Columns>

                  <Columns $mt={19}>
                    <div>
                      <Label>Subnet IDs</Label>
                      <Box>
                        <Placeholder>Select a subnet</Placeholder>
                        <CaretIcon />
                      </Box>
                      <Token $w={187} $h={55} $tall>
                        <div>
                          subnet-826da1ff
                          <TokenSub>us-east-2b - use2-az2</TokenSub>
                        </div>
                        <TokenClose width="16" height="24" viewBox="0 0 16 24" $mt={1}>
                          <path d="M2 5l12 14M14 5L2 19" stroke="#0972d3" strokeWidth="2" fill="none" />
                        </TokenClose>
                      </Token>
                    </div>
                    <CheckRow $mt={2}>
                      <CheckBox $gap={9}><CheckMark /></CheckBox>
                      Use placement group
                    </CheckRow>
                  </Columns>

                  <Columns $mt={24}>
                    <div>
                      <Label>
                        Purchase type
                        <InfoDivider />
                        <InfoLink $ml={10}>Info</InfoLink>
                      </Label>
                      <Box>
                        <BoxValue>On-Demand</BoxValue>
                        <CaretIcon />
                      </Box>
                    </div>
                    <div>
                      <Label>
                        Allocation strategy
                        <InfoDivider />
                        <InfoLink $ml={10}>Info</InfoLink>
                      </Label>
                      <Box>
                        <BoxValue />
                        <CaretIcon />
                      </Box>
                    </div>
                  </Columns>

                  <Divider />

                  <TitleRow $mt={15}>
                    <SectionTitle>Compute resources</SectionTitle>
                    <PillButton $w={156}>Add resource</PillButton>
                  </TitleRow>
                  <SubText>Configure up to 50 compute resources.</SubText>
                  <ResourceTitle>Resource 1 - hpc6a</ResourceTitle>

                  <Columns $mt={19}>
                    <NodeColumns>
                      <div>
                        <Label>Static nodes</Label>
                        <Box>
                          <BoxValue>0</BoxValue>
                        </Box>
                      </div>
                      <div>
                        <Label>Dynamic nodes</Label>
                        <Box $focus>
                          <BoxValue>
                            10
                            <TextCaret />
                          </BoxValue>
                          <Spinner>
                            <SpinArrow $up />
                            <SpinArrow />
                          </Spinner>
                        </Box>
                      </div>
                    </NodeColumns>
                    <div>
                      <Label>Instance type</Label>
                      <Box>
                        <Placeholder>Select one or more instance types</Placeholder>
                        <CaretIcon />
                      </Box>
                      <Token $w={165} $h={38}>
                        hpc6a.48xlarge
                        <TokenClose width="16" height="20" viewBox="0 0 16 20">
                          <path d="M2 3l12 14M14 3L2 17" stroke="#0972d3" strokeWidth="2" fill="none" />
                        </TokenClose>
                      </Token>
                    </div>
                  </Columns>

                  <Label $mt={15}>
                    CapacityReservationTarget
                    <InfoDivider />
                    <InfoLink $ml={10}>Info</InfoLink>
                  </Label>
                  <Box $w="689px">
                    <BoxValue>none</BoxValue>
                    <CaretIcon />
                  </Box>

                  <CheckRow $mt={17} $off>
                    <CheckBox $off $gap={9} />
                    Turn off multithreading
                    <InfoLink $ml={9}>Info</InfoLink>
                  </CheckRow>
                  <CheckRow $mt={20}>
                    <CheckBox $gap={9}><CheckMark /></CheckBox>
                    Use EFA
                  </CheckRow>
                </FormCard>
              </MainColumn>
            </ScrolledPage>
          </Viewport>
        </AppColumn>
        <ScrollTrack>
          <ScrollArrow>
            <svg width="11" height="8"><path d="M5.500 0L11 8H0z" fill="#505050" /></svg>
          </ScrollArrow>
          <ScrollThumb />
          <ScrollArrow $down>
            <svg width="11" height="8"><path d="M0 0h11L5.500 8z" fill="#505050" /></svg>
          </ScrollArrow>
        </ScrollTrack>
        <FloatButton>
          <svg width="18" height="16" viewBox="0 0 18 16">
            <path d="M1 2.500h16M1 8h16M1 13.500h16" stroke="#fff" strokeWidth="2.200" strokeLinecap="round" />
          </svg>
        </FloatButton>
        <FloatButton $right>
          <svg width="18" height="18" viewBox="0 0 18 18">
            <circle cx="9" cy="9" r="7.500" fill="none" stroke="#fff" strokeWidth="2" />
            <path d="M9 7.500v5.500M9 4v2" stroke="#fff" strokeWidth="2.400" />
          </svg>
        </FloatButton>
      </AppView>

      <Taskbar>
        <Weather>
          <WeatherSun />
          <WeatherBadge>3</WeatherBadge>
          <WeatherTemp>46°F</WeatherTemp>
          <WeatherSky>Sunny</WeatherSky>
        </Weather>
        <WindowsLogo />
        <SearchPill>
          <svg width="22" height="24" viewBox="0 0 22 24">
            <circle cx="10" cy="10" r="7.500" fill="none" stroke="#e6e8ec" strokeWidth="2" />
            <path d="M15 16l5 6" stroke="#e6e8ec" strokeWidth="2.200" />
          </svg>
          <SearchText>Search</SearchText>
          <Mascot width="68" height="37" viewBox="0 0 68 37">
            <path d="M34 14l10-8 6 3 8-4 10 13v10H34z" fill="#6f8cbf" />
            <circle cx="55" cy="5" r="3.500" fill="#e8c98a" />
            <ellipse cx="39" cy="31" rx="29" ry="6" fill="#5f87a8" />
            <path d="M1 30c3-6 10-9 16-10-3 3-6 6-5 10 2 3 6 4 10 5-9 1-19-1-21-5z" fill="#b8d8ea" />
            <ellipse cx="38" cy="20" rx="19" ry="9.500" fill="#efe6f5" />
            <ellipse cx="22" cy="16" rx="7.500" ry="6.500" fill="#f8f4fa" />
            <circle cx="16" cy="10" r="1.800" fill="#f8f4fa" />
            <circle cx="26" cy="10" r="1.800" fill="#f8f4fa" />
            <rect x="17" y="25" width="20" height="3" rx="1.500" fill="#efe6f5" />
            <rect x="42" y="25" width="12" height="4" rx="2" fill="#d9cde6" />
            <circle cx="19" cy="15" r=".9" fill="#222" />
            <circle cx="23" cy="15" r=".9" fill="#222" />
            <circle cx="20.500" cy="19" r="1.100" fill="#222" />
          </Mascot>
        </SearchPill>
        <TaskIcon $ml={17} $w={34}><TaskViewIcon /></TaskIcon>
        <TaskIcon $ml={27} $w={35}><ExplorerIcon /></TaskIcon>
        <TaskIcon $ml={17} $w={56} $active>
          <ChromeBall><ChromeEye /></ChromeBall>
          <ProfileDot>G</ProfileDot>
          <RunBar $wide />
        </TaskIcon>
        <TaskIcon $ml={17} $w={35}>
          <OutlookIcon />
          <RunBar />
        </TaskIcon>
        <TaskIcon $ml={28} $w={32}><SpotifyIcon /></TaskIcon>
        <TaskIcon $ml={28} $w={35}><VscodeIcon /></TaskIcon>
        <Tray>
          <svg width="16" height="10" viewBox="0 0 16 10">
            <path d="M1 9l7-7 7 7" fill="none" stroke="#fff" strokeWidth="1.800" />
          </svg>
          <TrayIcon $ml={27}>
            <svg width="23" height="18" viewBox="0 0 23 18">
              <path d="M6 18a5.500 5.500 0 0 1-.5-11A7 7 0 0 1 18 8.500 4.800 4.800 0 0 1 18 18z" fill="#e8e8e8" />
            </svg>
          </TrayIcon>
          <TrayIcon $ml={24}>
            <svg width="22" height="22" viewBox="0 0 22 22">
              <g fill="none" stroke="#fff" strokeWidth="1.700">
                <path d="M1 8a14 14 0 0 1 20 0M4 11.500a10 10 0 0 1 14 0M7 15a6 6 0 0 1 8 0" />
              </g>
              <circle cx="11" cy="19" r="1.800" fill="#fff" />
            </svg>
          </TrayIcon>
          <TrayIcon $ml={11}>
            <svg width="21" height="22" viewBox="0 0 21 22">
              <path d="M1 8h4l6-5v16l-6-5H1z" fill="none" stroke="#fff" strokeWidth="1.600" />
              <path d="M14 7a6 6 0 0 1 0 8M17 4a10 10 0 0 1 0 14" fill="none" stroke="#9aa0a8" strokeWidth="1.300" />
            </svg>
          </TrayIcon>
          <TrayIcon $ml={13}>
            <svg width="24" height="18" viewBox="0 0 24 18">
              <rect x="1" y="1" width="19" height="16" rx="4" fill="none" stroke="#fff" strokeWidth="1.800" />
              <rect x="4" y="4" width="11" height="10" rx="1.500" fill="#fff" />
              <rect x="21" y="6" width="2.500" height="6" rx="1" fill="#fff" />
            </svg>
          </TrayIcon>
          <Clock>
            9:14 AM
            <br />
            2/27/2025
          </Clock>
        </Tray>
      </Taskbar>
    </Screen>
  );
};

export default App;
